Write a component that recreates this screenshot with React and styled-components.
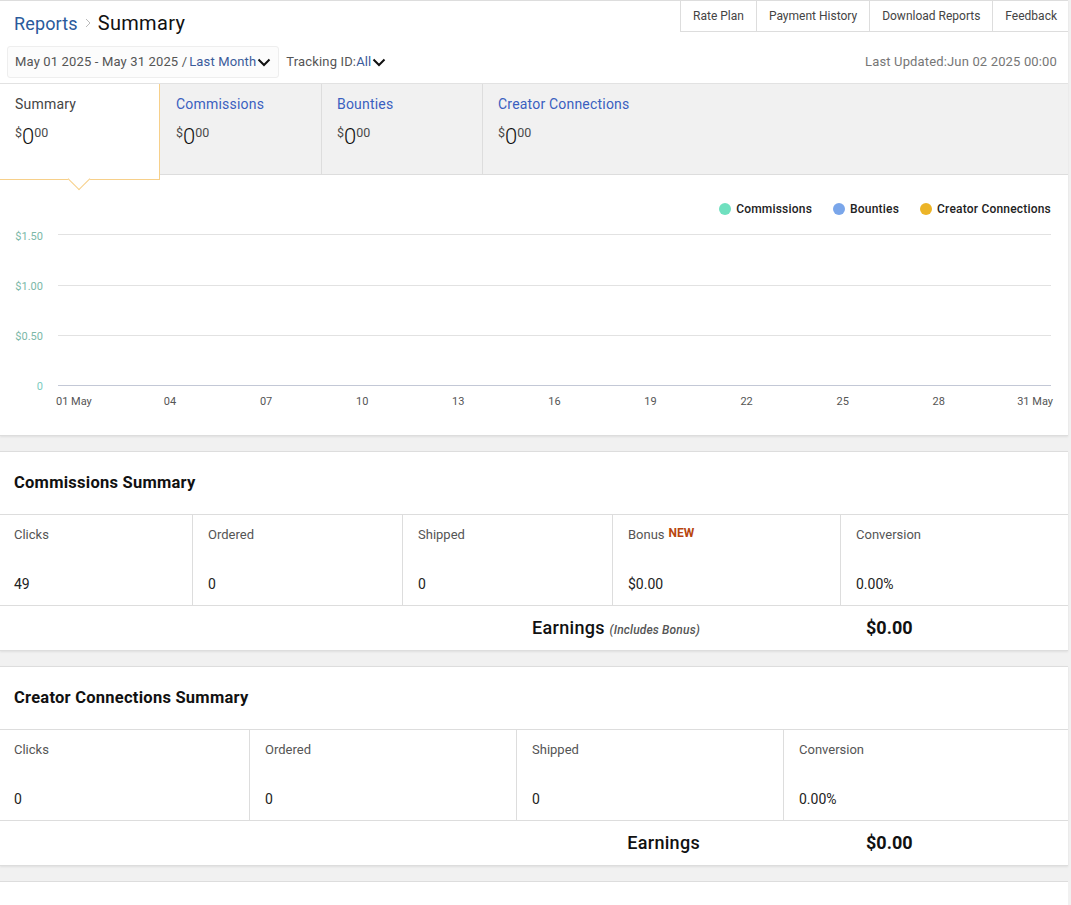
import styled, { createGlobalStyle } from "styled-components";

const GlobalStyle = createGlobalStyle`
  html, body {
    margin: 0;
    padding: 0;
    background: #f1f1f1;
    font-family: Roboto, "Noto Sans", Arial, sans-serif;
    color: #111;
  }
  body {
    overflow: hidden;
    height: 905px;
  }
`;

const navLinks = ["Rate Plan", "Payment History", "Download Reports", "Feedback"];
const tabs = ["Summary", "Commissions", "Bounties", "Creator Connections"];
const legend = [
  { label: "Commissions", color: "#6fe0bf" },
  { label: "Bounties", color: "#7aa6ea" },
  { label: "Creator Connections", color: "#ecb427" },
];
const yTicks = [
  { label: "$1.50", y: 234.5, textY: 239.5 },
  { label: "$1.00", y: 285.5, textY: 289.5 },
  { label: "$0.50", y: 335.5, textY: 339.5 },
];
const xTicks = ["04", "07", "10", "13", "16", "19", "22", "25", "28"];

const commissions = [
  { label: "Clicks", value: "49", width: 192 },
  { label: "Ordered", value: "0", width: 210 },
  { label: "Shipped", value: "0", width: 210 },
  { label: "Bonus", value: "$0.00", width: 228, isNew: true },
  { label: "Conversion", value: "0.00%", width: 228 },
];
const creator = [
  { label: "Clicks", value: "0", width: 249 },
  { label: "Ordered", value: "0", width: 267 },
  { label: "Shipped", value: "0", width: 267 },
  { label: "Conversion", value: "0.00%", width: 285 },
];

const Chevron = () => (
  <ChevronIcon viewBox="0 0 14 9" aria-hidden="true">
    <path d="M1.5 1.5 7 7l5.5-5.5" fill="none" stroke="#111" strokeWidth="2" />
  </ChevronIcon>
);

const Money = () => (
  <Amount>
    <Sup>$</Sup>
    <Big>0</Big>
    <Sup>00</Sup>
  </Amount>
);

const Stats = ({ cells }) => (
  <StatRow>
    {cells.map((c) => (
      <StatCell key={c.label} $width={c.width}>
        <StatLabel>
          {c.label}
          {c.isNew && <NewTag>NEW</NewTag>}
        </StatLabel>
        <StatValue>{c.value}</StatValue>
      </StatCell>
    ))}
  </StatRow>
);

const App = () => {
  return (
    <Page>
      <GlobalStyle />
      <Card>
        <Header>
          <TopRow>
            <Crumbs>
              <CrumbLink>Reports</CrumbLink>
              <CrumbSep viewBox="0 0 6 10" aria-hidden="true">
                <path d="M1 1l4 4-4 4" fill="none" stroke="#bbb" strokeWidth="1" />
              </CrumbSep>
              <CrumbCurrent>Summary</CrumbCurrent>
            </Crumbs>
            <Nav>
              {navLinks.map((n) => (
                <NavItem key={n}>{n}</NavItem>
              ))}
            </Nav>
          </TopRow>
          <FilterRow>
            <DateFilter>
              May 01 2025 - May 31 2025 /<RangeName>Last Month</RangeName>
              <Chevron />
            </DateFilter>
            <TrackingFilter>
              Tracking ID:<Accent>All</Accent>
              <Chevron />
            </TrackingFilter>
            <Updated>Last Updated:Jun 02 2025 00:00</Updated>
          </FilterRow>
        </Header>

        <Tabs>
          {tabs.map((t, i) => (
            <Tab key={t} $active={i === 0} $last={i === tabs.length - 1}>
              <TabTitle $active={i === 0}>{t}</TabTitle>
              <Money />
            </Tab>
          ))}
        </Tabs>

        <Chart>
          <Legend>
            {legend.map((l) => (
              <LegendItem key={l.label}>
                <Dot $color={l.color} />
                {l.label}
              </LegendItem>
            ))}
          </Legend>
          <ChartSvg viewBox="0 175 1068 260">
            {yTicks.map((t) => (
              <g key={t.label}>
                <line x1="58" x2="1051" y1={t.y} y2={t.y} stroke="#e2e2e2" />
                <text x="43" y={t.textY} textAnchor="end" fill="#7bb8a8" fontSize="11">
                  {t.label}
                </text>
              </g>
            ))}
            <line x1="58" x2="1051" y1="385.5" y2="385.5" stroke="#c3c8d6" />
            <text x="43" y="389.5" textAnchor="end" fill="#7ccbc0" fontSize="11">
              0
            </text>
            <text x="56" y="405" fill="#555" fontSize="11">
              01 May
            </text>
            {xTicks.map((t, i) => (
              <text key={t} x={170 + i * 96.1} y="405" textAnchor="middle" fill="#555" fontSize="11">
                {t}
              </text>
            ))}
            <text x="1053" y="405" textAnchor="end" fill="#555" fontSize="11">
              31 May
            </text>
          </ChartSvg>
        </Chart>
      </Card>

      <Panel>
        <PanelTitle>Commissions Summary</PanelTitle>
        <Stats cells={commissions} />
        <EarningsRow>
          <EarningsLabel>
            Earnings <EarningsNote>(Includes Bonus)</EarningsNote>
          </EarningsLabel>
          <EarningsValue>$0.00</EarningsValue>
        </EarningsRow>
      </Panel>

      <Panel>
        <PanelTitle>Creator Connections Summary</PanelTitle>
        <Stats cells={creator} />
        <EarningsRow>
          <EarningsLabel>Earnings</EarningsLabel>
          <EarningsValue>$0.00</EarningsValue>
        </EarningsRow>
      </Panel>

      <PanelStub />
    </Page>
  );
};
export default App;

const Page = styled.div`
  width: 1068px;
  display: flex;
  flex-direction: column;
`;

const Card = styled.section`
  background: #fff;
  border-top: 1px solid #ddd;
  border-bottom: 1px solid #ddd;
  box-shadow: 0 1px 2px rgba(0, 0, 0, 0.08);
`;

const Header = styled.div`
  display: flex;
  flex-direction: column;
  border-bottom: 1px solid #e2e2e2;
  box-sizing: border-box;
  height: 83px;
`;

const TopRow = styled.div`
  display: flex;
  justify-content: space-between;
  height: 45px;
  padding-left: 14px;
`;

const Crumbs = styled.div`
  display: flex;
  align-items: center;
  height: 44px;
  gap: 7px;
`;

const CrumbLink = styled.a`
  font-size: 18px;
  letter-spacing: 0.15px;
  color: #2a5a9c;
`;

const CrumbSep = styled.svg`
  width: 6px;
  height: 10px;
`;

const CrumbCurrent = styled.span`
  font-size: 20px;
  letter-spacing: 0.3px;
  color: #111;
`;

const Nav = styled.nav`
  display: flex;
  height: 31px;
  border-left: 1px solid #ddd;
  border-bottom: 1px solid #ddd;
  box-sizing: border-box;
`;

const NavItem = styled.a`
  display: flex;
  align-items: center;
  padding: 0 12px;
  font-size: 12px;
  color: #444;
  border-left: 1px solid #ddd;
  &:first-child {
    border-left: 0;
  }
  &:last-child {
    padding-right: 11px;
  }
`;

const FilterRow = styled.div`
  display: flex;
  align-items: center;
  padding: 0 11px 0 7px;
  height: 32px;
  font-size: 13px;
  letter-spacing: 0.15px;
  color: #555;
`;

const DateFilter = styled.div`
  display: flex;
  align-items: center;
  height: 32px;
  padding: 0 7px 2px;
  box-sizing: border-box;
  border: 1px solid #eee;
  border-radius: 3px;
  background: #fcfcfc;
`;

const TrackingFilter = styled.div`
  display: flex;
  align-items: center;
  margin-left: 7px;
  padding-bottom: 2px;
`;

const Accent = styled.span`
  color: #3b5b9b;
`;

const RangeName = styled(Accent)`
  margin-left: 2px;
`;

const ChevronIcon = styled.svg`
  width: 14px;
  height: 9px;
  margin: 2px 0 0 1px;
`;

const Updated = styled.div`
  margin-left: auto;
  padding-bottom: 2px;
  color: #767676;
`;

const Tabs = styled.div`
  display: flex;
  height: 91px;
  background: #f1f1f1;
  border-bottom: 1px solid #ddd;
  box-sizing: border-box;
`;

const Tab = styled.div`
  position: relative;
  box-sizing: border-box;
  padding: 11px 15px;
  width: 161px;
  flex: ${(p) => (p.$last ? "1" : "none")};
  border-right: ${(p) => (p.$last ? "0" : "1px solid #ddd")};
  ${(p) =>
    p.$active &&
    `
    width: 160px;
    margin-right: 1px;
    background: #fff;
    height: 96px;
    border-right: 1px solid #f7d08a;
    border-bottom: 1px solid #f7d08a;
    z-index: 1;
    &::after {
      content: "";
      position: absolute;
      left: 71px;
      bottom: -8px;
      width: 15px;
      height: 15px;
      background: #fff;
      border-right: 1px solid #f7d08a;
      border-bottom: 1px solid #f7d08a;
      transform: rotate(45deg);
    }
  `}
`;

const TabTitle = styled.div`
  font-size: 14px;
  line-height: 18px;
  letter-spacing: 0.2px;
  color: ${(p) => (p.$active ? "#444" : "#3a5fc0")};
`;

const Amount = styled.div`
  display: flex;
  align-items: flex-start;
  margin-top: 11px;
  height: 26px;
  color: #111;
`;

const Sup = styled.span`
  margin-top: 2px;
  font-size: 12.5px;
  line-height: 14px;
  color: #4a4a4a;
`;

const Big = styled.span`
  font-size: 22px;
  font-weight: 300;
  line-height: 26px;
`;

const Chart = styled.div`
  position: relative;
  height: 260px;
`;

const Legend = styled.div`
  position: absolute;
  top: 27px;
  right: 17px;
  display: flex;
  gap: 21px;
  font-size: 12px;
  font-weight: 500;
  letter-spacing: 0.2px;
  color: #222;
`;

const LegendItem = styled.div`
  display: flex;
  align-items: center;
  gap: 5px;
`;

const Dot = styled.span`
  width: 12px;
  height: 12px;
  border-radius: 50%;
  background: ${(p) => p.$color};
`;

const ChartSvg = styled.svg`
  display: block;
  width: 1068px;
  height: 260px;
  font-family: Roboto, "Noto Sans", Arial, sans-serif;
`;

const Panel = styled.section`
  margin-top: 15px;
  height: 200px;
  box-sizing: border-box;
  background: #fff;
  border-top: 1px solid #ddd;
  border-bottom: 1px solid #ddd;
  box-shadow: 0 1px 2px rgba(0, 0, 0, 0.08);
  flex: none;
`;

const PanelStub = styled.section`
  margin-top: 15px;
  height: 24px;
  background: #fff;
  border-top: 1px solid #ddd;
`;

const PanelTitle = styled.h2`
  margin: 0;
  height: 63px;
  box-sizing: border-box;
  padding: 0 0 1px 14px;
  display: flex;
  align-items: center;
  font-size: 16.5px;
  font-weight: 700;
  letter-spacing: 0.25px;
  color: #111;
  border-bottom: 1px solid #ddd;
`;

const StatRow = styled.div`
  display: flex;
  height: 91px;
  border-bottom: 1px solid #ddd;
  box-sizing: border-box;
`;

const StatCell = styled.div`
  box-sizing: border-box;
  width: ${(p) => p.$width}px;
  padding: 11px 15px;
  border-left: 1px solid #ddd;
  &:first-child {
    padding-left: 14px;
    border-left: 0;
  }
`;

const StatLabel = styled.div`
  font-size: 13px;
  line-height: 18px;
  color: #555;
`;

const NewTag = styled.span`
  margin-left: 4px;
  font-size: 12px;
  line-height: 1;
  font-weight: 700;
  color: #b8460e;
  vertical-align: 2px;
`;

const StatValue = styled.div`
  margin-top: 31px;
  font-size: 14px;
  line-height: 18px;
  color: #222;
`;

const EarningsRow = styled.div`
  display: flex;
  align-items: center;
  height: 44px;
  padding-bottom: 2px;
  box-sizing: border-box;
`;

const EarningsLabel = styled.div`
  width: 700px;
  text-align: right;
  font-size: 18px;
  font-weight: 500;
  letter-spacing: 0.3px;
  color: #111;
`;

const EarningsNote = styled.span`
  font-size: 12px;
  font-style: italic;
  font-weight: 500;
  letter-spacing: 0.15px;
  color: #555;
`;

const EarningsValue = styled.div`
  margin-left: 166px;
  font-size: 18px;
  font-weight: 700;
  color: #111;
`;
